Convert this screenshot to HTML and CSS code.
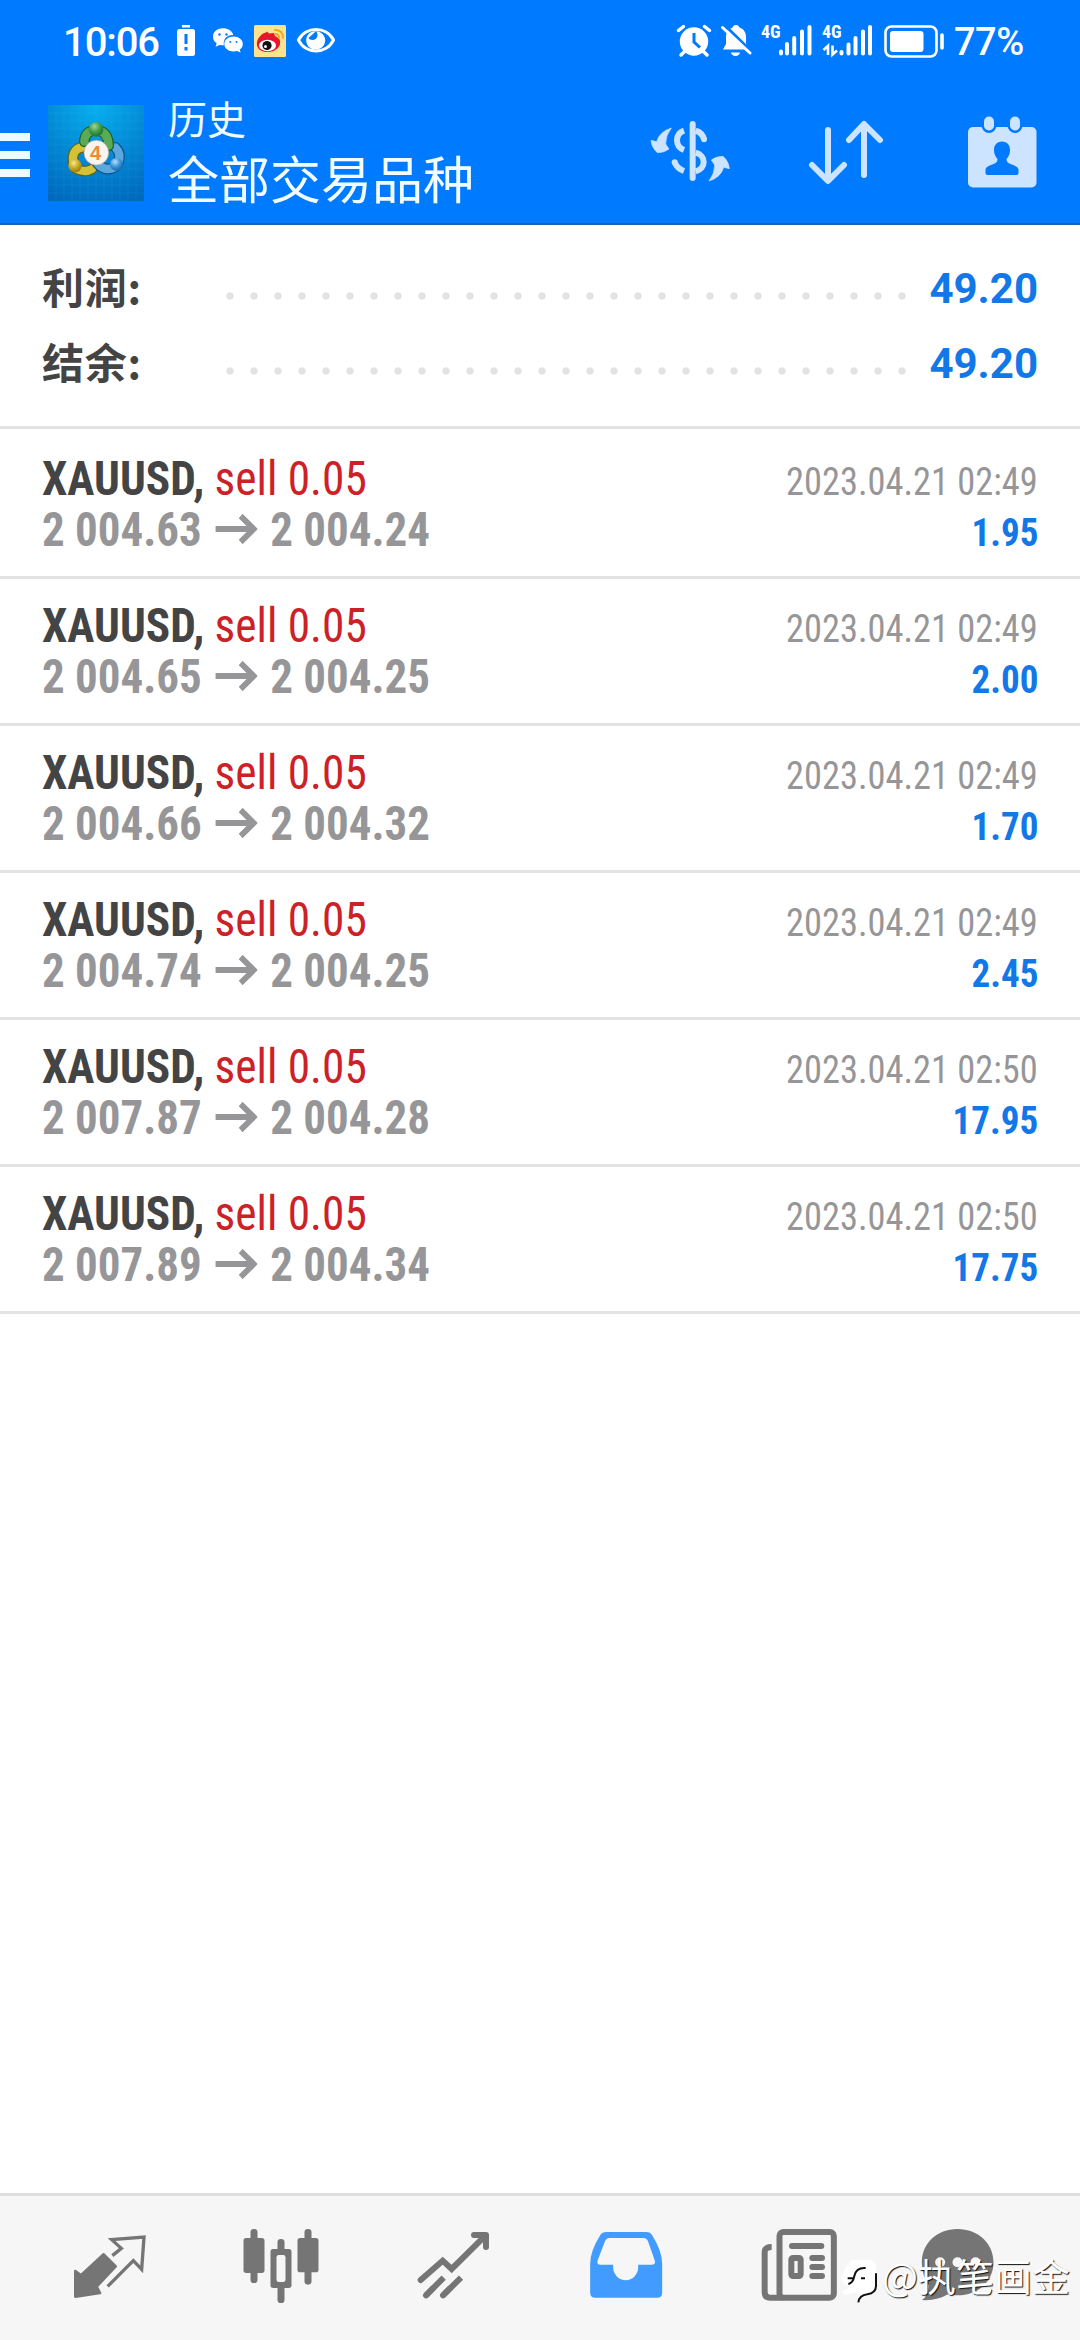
FILE: index.html
```html
<!DOCTYPE html>
<html lang="zh-CN">
<head>
<meta charset="utf-8">
<title>历史</title>
<link rel="stylesheet" href="styles.css">
</head>
<body>
<div class="screen">
  <header class="header">
    <div class="status">
      <span class="time">10:06</span>
      <svg class="s-batt" width="20" height="40" viewBox="176 20 20 40"><rect x="182" y="25" width="8" height="2.5" fill="#fff"/><rect x="177" y="29" width="18" height="27" rx="2.5" fill="#fff"/><path d="M186 34v10M186 47v3.5" stroke="#007aff" stroke-width="3"/></svg>
      <svg class="s-wechat" width="32" height="40" viewBox="212 20 32 40"><path fill="#fff" d="M222.500 28.300c-5.500 0-9.500 3.700-9.500 8.400 0 2.900 1.400 5.100 3.600 6.600l-1 3.400 4-1.800c1.600.4 3 .5 4.400.4-1.500-6.700 4-11 9.300-10.300-1-4-5.400-6.700-10.800-6.700z"/><path fill="#fff" d="M233.500 36.500c5.200 0 9.300 3.300 9.300 7.400 0 2.300-1.200 4.200-3 5.600l.8 3-3.600-1.500c-7 1.600-12.700-2-12.700-7.100 0-4.100 4-7.400 9.200-7.400z"/><g fill="#007aff"><circle cx="219.500" cy="34.500" r="1.200"/><circle cx="226.500" cy="34.500" r="1.200"/><circle cx="230.300" cy="42" r="1"/><circle cx="236.500" cy="42" r="1"/></g></svg>
      <svg class="s-weibo" width="32" height="40" viewBox="254 20 32 40"><rect x="254" y="25" width="32" height="32" rx="1.500" fill="#ffe38f"/><path fill="#e6162d" d="M257 45c-1-6 5-12 9-12.500l1-1 2 2 5-.5 1 3 4 2.500c4 7-3 13-10 13.500-6 .5-11.500-2-12-7z"/><ellipse cx="267.500" cy="45.500" rx="8.500" ry="5.800" fill="#fff"/><circle cx="267" cy="45.500" r="4.600" fill="#111"/><circle cx="265.500" cy="46.500" r="1.500" fill="#fff"/><path d="M275.500 34q3.500 0 3.500 4M275 30q8 0 8 8" fill="none" stroke="#f6a623" stroke-width="2" stroke-linecap="round"/></svg>
      <svg class="s-eye" width="40" height="40" viewBox="296 20 40 40"><path d="M298.500 40c7-14 28-14 35 0-7 14.500-28 14.500-35 0z" fill="none" stroke="#fff" stroke-width="3"/><path d="M316 31.300c-6-.3-9.800 4-9.800 9 0 5.700 4.200 9.300 9.500 9.300s9.500-4 9.500-9.300c0-4.500-4-9-9.200-9 3 2.700 1.500 8.700-3.500 8.700-2 0-3.500-1-4-2" fill="#fff"/></svg>
      <span class="grow"></span>
      <svg class="s-alarm" width="36" height="40" viewBox="676 20 36 40"><circle cx="694" cy="41.500" r="14.200" fill="#fff"/><path d="M678.500 30.500l5-4M709.500 30.500l-5-4M685 51l-4 4M703 51l4 4" stroke="#fff" stroke-width="3.500" stroke-linecap="round"/><path d="M694 33v9l6 5.500" fill="none" stroke="#007aff" stroke-width="3"/></svg>
      <svg class="s-bell" width="32" height="40" viewBox="720 20 32 40"><path fill="#fff" d="M736 25c2 0 3 1 3.500 2.500 4.500 1.500 6.500 5 6.500 9.500v7l3 5.500H723l3-5.500v-7c0-5 2.500-8 6.500-9.500.5-1.500 1.500-2.500 3.500-2.500zM731 52.500h9c-.5 2-2 3.500-4.500 3.500s-4-1.500-4.500-3.500z"/><path d="M724 24.500l28 27.500" stroke="#007aff" stroke-width="3"/><path d="M722.500 27.500L750 53" stroke="#fff" stroke-width="3" stroke-linecap="round"/></svg>
      <span class="net"><b>4G</b><svg width="34" height="40" viewBox="778 20 34 40"><path d="M781 51.500v2M787 44v9.500M794.200 38v15.500M802 31.500v22M809.500 27v26.500" stroke="#fff" stroke-width="4" stroke-linecap="round"/></svg></span>
      <span class="net net2"><b>4G</b><svg width="51" height="40" viewBox="822 20 51 40"><path d="M841.500 52v1.500M848.500 44.500v9M855.500 38v15.500M863 31.500v22M870 27v26.500" stroke="#fff" stroke-width="4" stroke-linecap="round"/><path d="M823.500 50l4.500-4v9M837 50.500l-4.500 4v-9" fill="none" stroke="#fff" stroke-width="2.600"/></svg></span>
      <svg class="s-power" width="62" height="40" viewBox="884 20 62 40"><rect x="885.500" y="26.500" width="51" height="30" rx="6" fill="none" stroke="#fff" stroke-width="2.600"/><rect x="890" y="31" width="33.500" height="21" rx="3" fill="#fff"/><path d="M942 35v13" stroke="#fff" stroke-width="3.600" stroke-linecap="round"/></svg>
      <span class="pct">77%</span>
    </div>
    <div class="toolbar">
      <div class="burger"><i></i><i></i><i></i></div>
      <svg class="app" width="96" height="96" viewBox="24 15 288 288">
        <defs>
          <radialGradient id="bg" cx=".5" cy="0" r="1.100"><stop offset="0" stop-color="#06b0ee"/><stop offset=".5" stop-color="#0388d4"/><stop offset="1" stop-color="#0067bd"/></radialGradient>
          <radialGradient id="g" cx=".4" cy=".3" r=".8"><stop offset="0" stop-color="#a2d59a"/><stop offset=".5" stop-color="#3f9a44"/><stop offset="1" stop-color="#176627"/></radialGradient>
          <radialGradient id="y" cx=".4" cy=".3" r=".8"><stop offset="0" stop-color="#f7e88c"/><stop offset=".5" stop-color="#c9a821"/><stop offset="1" stop-color="#8a6c0c"/></radialGradient>
          <radialGradient id="b" cx=".4" cy=".3" r=".8"><stop offset="0" stop-color="#b7e0fa"/><stop offset=".5" stop-color="#3a94d8"/><stop offset="1" stop-color="#155a9e"/></radialGradient>
        </defs>
        <rect x="24" y="15" width="288" height="288" fill="url(#bg)"/>
        <path d="M48 15v288M72 15v288M96 15v288M120 15v288M144 15v288M168 15v288M192 15v288M216 15v288M240 15v288M264 15v288M288 15v288M24 39h288M24 63h288M24 87h288M24 111h288M24 135h288M24 159h288M24 183h288M24 207h288M24 231h288M24 255h288M24 279h288" stroke="#7fd4ff" stroke-opacity=".1" stroke-width="2"/>
        <g fill="none" stroke-linecap="round">
          <path d="M101 192q-10-46 30-51M108 206q26 14 48 1" stroke="#5f6414" stroke-width="32"/>
          <path d="M101 192q-10-46 30-51M108 206q26 14 48 1" stroke="#d3c236" stroke-width="25"/>
          <path d="M226 142q20 20 8 48M170 188q24 30 56 13" stroke="#0f558f" stroke-width="32"/>
          <path d="M226 142q20 20 8 48M170 188q24 30 56 13" stroke="#5aa8de" stroke-width="25"/>
          <path d="M133 125q2-34 35-34q36 0 38 46" stroke="#155f2a" stroke-width="32"/>
          <path d="M133 125q2-34 35-34q36 0 38 46" stroke="#5caa55" stroke-width="25"/>
        </g>
        <circle cx="168" cy="88" r="22" fill="url(#g)"/><circle cx="105" cy="197" r="20" fill="url(#y)"/><circle cx="229" cy="193" r="19" fill="url(#b)"/>
        <circle cx="169" cy="158" r="37" fill="#f8f5f0" stroke="#b9a58a" stroke-width="2"/>
        <text x="167" y="180" text-anchor="middle" class="four">4</text>
      </svg>
      <div class="titles"><span class="sub">历史</span><span class="main">全部交易品种</span></div>
      <svg class="t-cash" width="120" height="120" viewBox="0 0 360 360"><g fill="none" stroke="#cce4ff" stroke-width="18"><path d="M158 102v162" stroke-linecap="round"/><path d="M132 122c-28 10-28 47 0 58"/><path d="M167 122q20 6 25 26"/><path d="M192 148v0" stroke-linecap="round"/><path d="M167 188c32 8 32 48 0 56"/><path d="M132 243q-20-7-28-26"/><path d="M104 217v0" stroke-linecap="round"/></g><g fill="#cce4ff" stroke="#cce4ff" stroke-width="2" stroke-linejoin="round"><path d="M94 114q-17 22-17 48l10 15q-14 11-35 11q-17-15-19-37l17 4q8-30 44-41z"/><path transform="rotate(180 150.500 193.500)" d="M94 114q-17 22-17 48l10 15q-14 11-35 11q-17-15-19-37l17 4q8-30 44-41z"/></g></svg>
      <svg class="t-sort" width="76" height="66" viewBox="808 120 76 66"><path d="M828 130v50M812 165l16 16 16-16M864 175v-50M849 140l15-16 16 16" fill="none" stroke="#cce4ff" stroke-width="6" stroke-linecap="round" stroke-linejoin="round"/></svg>
      <svg class="t-cal" width="70" height="74" viewBox="967 115 70 74"><rect x="968" y="127" width="68.500" height="60.500" rx="5" fill="#cce4ff"/><g fill="#cce4ff" stroke="#007aff" stroke-width="5" paint-order="stroke"><rect x="984" y="116.500" width="10" height="14" rx="5"/><rect x="1010" y="116.500" width="10" height="14" rx="5"/></g><path fill="#007aff" d="M1002 141.500c5 0 8 3.500 8 8.500 0 4-1.500 7-3.500 9 0 3 1.500 4 4 5 5 2 8 3 8 6v3q0 2-2 2h-29q-2 0-2-2v-3c0-3 3-4 8-6 2.500-1 4-2 4-5-2-2-3.500-5-3.500-9 0-5 3-8.500 8-8.500z"/></svg>
    </div>
  </header>

  <section class="summary">
    <div class="sum"><span class="k">利润:</span><span class="dots"></span><span class="v">49.20</span></div>
    <div class="sum"><span class="k">结余:</span><span class="dots"></span><span class="v">49.20</span></div>
  </section>

  <main class="deals">
    <article class="deal"><div class="line"><span class="name"><b>XAUUSD,</b> <em>sell 0.05</em></span><time>2023.04.21 02:49</time></div><div class="line"><span class="price">2 004.63<svg width="45" height="30"><path d="M0 15h41M27 2l14 13-14 13"/></svg>2 004.24</span><strong>1.95</strong></div></article>
    <article class="deal"><div class="line"><span class="name"><b>XAUUSD,</b> <em>sell 0.05</em></span><time>2023.04.21 02:49</time></div><div class="line"><span class="price">2 004.65<svg width="45" height="30"><path d="M0 15h41M27 2l14 13-14 13"/></svg>2 004.25</span><strong>2.00</strong></div></article>
    <article class="deal"><div class="line"><span class="name"><b>XAUUSD,</b> <em>sell 0.05</em></span><time>2023.04.21 02:49</time></div><div class="line"><span class="price">2 004.66<svg width="45" height="30"><path d="M0 15h41M27 2l14 13-14 13"/></svg>2 004.32</span><strong>1.70</strong></div></article>
    <article class="deal"><div class="line"><span class="name"><b>XAUUSD,</b> <em>sell 0.05</em></span><time>2023.04.21 02:49</time></div><div class="line"><span class="price">2 004.74<svg width="45" height="30"><path d="M0 15h41M27 2l14 13-14 13"/></svg>2 004.25</span><strong>2.45</strong></div></article>
    <article class="deal"><div class="line"><span class="name"><b>XAUUSD,</b> <em>sell 0.05</em></span><time>2023.04.21 02:50</time></div><div class="line"><span class="price">2 007.87<svg width="45" height="30"><path d="M0 15h41M27 2l14 13-14 13"/></svg>2 004.28</span><strong>17.95</strong></div></article>
    <article class="deal"><div class="line"><span class="name"><b>XAUUSD,</b> <em>sell 0.05</em></span><time>2023.04.21 02:50</time></div><div class="line"><span class="price">2 007.89<svg width="45" height="30"><path d="M0 15h41M27 2l14 13-14 13"/></svg>2 004.34</span><strong>17.75</strong></div></article>
  </main>

  <nav class="nav">
    <svg viewBox="150 84 360 360"><path fill="#757575" stroke="#757575" stroke-width="8" stroke-linejoin="round" d="M311 223l36 36-57 61 10 19-74 11v-77l17 13z"/><path fill="none" stroke="#757575" stroke-width="10" d="M337 227l27-22-29-26 97-8-7 97-25-26-77 77"/></svg>
    <svg viewBox="667.500 84 360 360"><g fill="#757575"><rect x="753" y="147" width="21" height="162" rx="10"/><rect x="732" y="174" width="63" height="105" rx="8"/><rect x="915" y="147" width="21" height="167" rx="10"/><rect x="894" y="174" width="63" height="103" rx="8"/><rect x="834" y="177" width="21" height="192" rx="10"/><rect x="813" y="207" width="63" height="117" rx="8"/></g><rect x="831" y="225" width="27" height="81" rx="7" fill="#f6f6f6"/></svg>
    <svg viewBox="105 84 360 360"><path fill="none" stroke="#757575" stroke-width="18" stroke-linecap="round" d="M182 300l66-58 27 25 101-100"/><path fill="none" stroke="#757575" stroke-width="18" stroke-linecap="round" stroke-linejoin="round" d="M342 165h36v36"/><path stroke="#757575" stroke-width="18" d="M198 346l53-53M249 346l54-53"/><path stroke="#757575" stroke-width="18" stroke-linecap="round" d="M198 346l20-20M249 346l20-20"/></svg>
    <svg viewBox="622.500 84 360 360"><path fill="#429bff" fill-rule="evenodd" d="M740 156h120q12 0 18 10 30 48 30 85v87q0 15-15 15H707q-15 0-15-15v-87q0-37 30-85 6-10 18-10zM749 174q-8 0-12 8l-23 60q-2 12 8 12h39v8a37 38 0 0 0 75 0v-8h41q12 0 9-12l-20-57q-4-11-14-11z"/></svg>
    <svg viewBox="60 84 360 360"><g fill="none" stroke="#757575"><rect x="181.500" y="156" width="163" height="197" rx="12" stroke-width="18"/><path d="M158 201q-21 0-21 16v120q0 16 16 16h40" stroke-width="18"/><rect x="217" y="234" width="28" height="54" rx="5" stroke-width="18"/><path stroke-width="18" stroke-linecap="round" d="M219 198h88M280 234h29M280 261h29M280 288h29"/></g></svg>
    <svg viewBox="577.500 84 360 360"><path fill="#757575" d="M714 147c62 0 108 43 108 100s-46 99-108 99q-14 0-29-3-32 20-78 17 20-13 22-43-22-30-22-70c0-57 45-100 107-100z"/><g fill="#f6f6f6"><circle cx="662" cy="247" r="15"/><circle cx="714" cy="247" r="15"/><circle cx="768" cy="247" r="15"/></g></svg>
  </nav>
  <div class="mark"><svg width="40" height="46" viewBox="0 0 120 138"><path fill="#fff" d="M38 6h54q19 0 19 20v55q0 20-20 26l-28 20 3-22H38Q14 118 8 100q22-4 24-20H16L6 62 20 28z"/><path fill="none" stroke="#111" stroke-width="6" d="M28 78q14-3 18-24 5-26 34-24M26 61h18M66 61h12M111 46v37q0 22-26 26-24 3-27 24"/></svg><span>@执笔画金</span></div>
</div>
</body>
</html>
```
FILE: styles.css
```css
* { box-sizing: border-box; }
body { margin: 0; background: #fff; font-family: Roboto, "Noto Sans CJK SC", sans-serif; }
svg { display: block; flex: none; }
.screen { position: relative; width: 1080px; height: 2340px; display: flex; flex-direction: column; background: #fff; overflow: hidden; }

.header { height: 225px; background: #007aff; border-bottom: 2px solid #1b62b0; flex: none; }
.status { height: 84px; padding: 20px 57px 0 63px; display: flex; color: #fff; }
.time { width: 113px; font-size: 40px; line-height: 45px; font-weight: 500; letter-spacing: -1.1px; }
.s-wechat { margin-left: 16px; }
.s-weibo { margin-left: 10px; }
.s-eye { margin-left: 10px; }
.grow { flex: 1; }
.s-bell { margin-left: 8px; }
.net { position: relative; display: flex; justify-content: flex-end; width: 52px; margin-left: 8px; }
.net2 { width: 53px; }
.net b { position: absolute; left: 1px; top: 3px; font: 700 18px/18px "Roboto Condensed", sans-serif; }
.net2 b { left: 2px; }
.s-power { margin-left: 11px; }
.pct { width: 69px; margin-left: 8px; font-size: 38px; line-height: 45px; font-weight: 500; letter-spacing: -.5px; }

.toolbar { height: 139px; display: flex; }
.burger { width: 30px; padding-top: 49px; display: flex; flex-direction: column; gap: 10px; }
.burger i { height: 8px; background: #ecfbff; }
.app { margin: 21px 0 0 18px; }
.four { font: 700 60px "Liberation Sans", sans-serif; fill: #f08a2c; }
.titles { margin-left: 24px; width: 460px; padding-top: 8px; display: flex; flex-direction: column; color: #f2fcff; font-family: "Noto Sans CJK SC", sans-serif; }
.sub { font-size: 39px; line-height: 50px; }
.main { font-size: 51px; line-height: 70px; }
.t-cash { margin: 6px 0 0 12px; }
.t-sort { margin: 36px 0 0 48px; }
.t-cal { margin: 31px 0 0 83px; }

.summary { flex: none; padding: 26px 42px 25px; border-bottom: 3px solid #e3e3e3; height: 204px; }
.sum { display: flex; align-items: center; height: 75px; font-size: 42px; line-height: 75px; font-weight: 700; }
.k { width: 176px; margin-bottom: 7px; color: #444; font-family: "Noto Sans CJK SC", sans-serif; letter-spacing: .8px; }
.dots { width: 696px; height: 8px; margin-top: 15px; background: radial-gradient(circle at 12px 4px, #e2e2e2 3.200px, transparent 4.200px) 0 0 / 24px 8px; }
.v { margin-left: auto; color: #1278e8; }

.deals { flex: 1; padding-top: 3px; font-family: "Roboto Condensed", Roboto, sans-serif; }
.deal { height: 147px; padding: 21px 42px 0; border-bottom: 3px solid #e3e3e3; }
.line { display: flex; justify-content: space-between; align-items: baseline; height: 51px; line-height: 51px; font-size: 48px; }
.name { color: #444; transform: scaleX(.944); transform-origin: left; }
.line em { font-style: normal; color: #cb2127; }
.line time, .line strong { font-size: 39px; transform-origin: right; }
.line time { color: #969698; transform: scaleX(.933); }
.line strong { color: #1278e8; transform: scaleX(.95); }
.price { font-weight: 700; color: #969698; transform: scaleX(.937); transform-origin: left; }
.price svg { display: inline-block; vertical-align: 2px; margin: 0 14px 0 14px; }
.price path { fill: none; stroke: #969698; stroke-width: 6; }

.nav { flex: none; height: 147px; padding: 12px 22px 0 24px; display: flex; justify-content: space-around; background: #f6f6f6; border-top: 3px solid #dedede; }
.nav svg { width: 120px; height: 120px; }
.mark { position: absolute; left: 839px; top: 2258px; display: flex; align-items: flex-start; color: #fff; }
.mark span { margin: -7px 0 0 3px; font: 400 38px/48px "Noto Sans CJK SC", sans-serif; white-space: nowrap; text-shadow: 1px 1px 1px #111; }
```
